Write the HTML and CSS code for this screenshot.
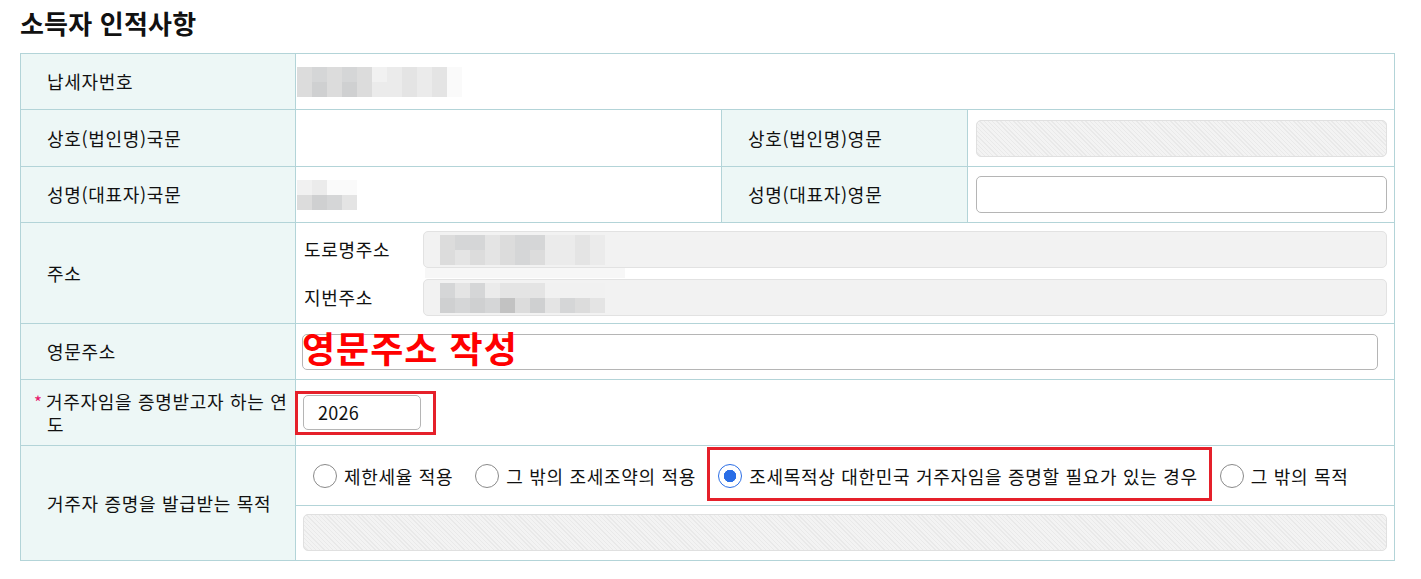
FILE: index.html
```html
<!DOCTYPE html>
<html lang="ko">
<head>
<meta charset="utf-8">
<title>소득자 인적사항</title>
<link rel="stylesheet" href="styles.css">
</head>
<body>
<div class="page">
  <h2 class="title">소득자 인적사항</h2>
  <table class="form">
    <colgroup>
      <col class="c1"><col class="c2"><col class="c3"><col class="c4">
    </colgroup>
    <tr class="r56">
      <th>납세자번호</th>
      <td colspan="3">
        <div class="mosaic m11">
          <i class="g2"></i><i class="g3"></i><i class="g2"></i><i class="g3"></i><i class="g2"></i><i class="g6"></i><i class="g5"></i><i class="g4"></i><i class="g5"></i><i class="g4"></i><i class="g7"></i>
          <i class="g2"></i><i class="g1"></i><i class="g2"></i><i class="g1"></i><i class="g2"></i><i class="g5"></i><i class="g5"></i><i class="g4"></i><i class="g5"></i><i class="g4"></i><i class="g7"></i>
        </div>
      </td>
    </tr>
    <tr class="r57">
      <th>상호(법인명)국문</th>
      <td></td>
      <th>상호(법인명)영문</th>
      <td><div class="inp striped"></div></td>
    </tr>
    <tr class="r56">
      <th>성명(대표자)국문</th>
      <td>
        <div class="mosaic m4">
          <i class="g6"></i><i class="g5"></i><i class="g7"></i><i class="g7"></i>
          <i class="g2"></i><i class="g1"></i><i class="g3"></i><i class="g4"></i>
        </div>
      </td>
      <th>성명(대표자)영문</th>
      <td><div class="inp white"></div></td>
    </tr>
    <tr class="r101">
      <th>주소</th>
      <td colspan="3" class="addr">
        <div class="addr-row">
          <span class="sub">도로명주소</span>
          <div class="inp grey wide">
            <div class="mosaic m11 in">
              <i class="g2"></i><i class="g3"></i><i class="g3"></i><i class="g4"></i><i class="g2"></i><i class="g3"></i><i class="g3"></i><i class="g5"></i><i class="g5"></i><i class="g4"></i><i class="g5"></i>
              <i class="g2"></i><i class="g4"></i><i class="g2"></i><i class="g4"></i><i class="g2"></i><i class="g3"></i><i class="g2"></i><i class="g5"></i><i class="g5"></i><i class="g4"></i><i class="g5"></i>
            </div>
          </div>
          <div class="smear"></div>
        </div>
        <div class="addr-row">
          <span class="sub">지번주소</span>
          <div class="inp grey wide">
            <div class="mosaic m11 in">
              <i class="g3"></i><i class="g4"></i><i class="g3"></i><i class="g5"></i><i class="g4"></i><i class="g4"></i><i class="g4"></i><i class="g6"></i><i class="g6"></i><i class="g6"></i><i class="g6"></i>
              <i class="g1"></i><i class="g3"></i><i class="g1"></i><i class="g3"></i><i class="g0"></i><i class="g2"></i><i class="g1"></i><i class="g4"></i><i class="g3"></i><i class="g2"></i><i class="g4"></i>
            </div>
          </div>
        </div>
      </td>
    </tr>
    <tr class="r56">
      <th>영문주소</th>
      <td colspan="3" class="eng">
        <div class="eng-wrap">
          <div class="inp white"></div>
          <span class="note">영문주소 작성</span>
        </div>
      </td>
    </tr>
    <tr class="r66">
      <th class="req"><span class="star">*</span>거주자임을 증명받고자 하는 연도</th>
      <td colspan="3" class="year">
        <div class="year-wrap">
          <div class="inp white year-inp">2026</div>
          <span class="mark"></span>
        </div>
      </td>
    </tr>
    <tr class="r115">
      <th>거주자 증명을 발급받는 목적</th>
      <td colspan="3" class="purpose">
        <div class="radios">
          <label class="opt"><span class="radio"></span>제한세율 적용</label>
          <label class="opt"><span class="radio"></span>그 밖의 조세조약의 적용</label>
          <label class="opt hl"><span class="radio on"></span>조세목적상 대한민국 거주자임을 증명할 필요가 있는 경우</label>
          <label class="opt"><span class="radio"></span>그 밖의 목적</label>
        </div>
        <div class="purpose-etc">
          <div class="inp striped"></div>
        </div>
      </td>
    </tr>
  </table>
</div>
</body>
</html>
```

FILE: styles.css
```css
* { box-sizing: border-box; }
html, body { margin: 0; padding: 0; background: #fff; }
body {
  font-family: "Noto Sans CJK KR", "Noto Sans", sans-serif;
  color: #111;
  font-size: 18px;
  letter-spacing: 0.7px;
}
.page { padding: 0 27px 0 20px; }
.title {
  margin: 0;
  padding-top: 5px;
  font-size: 26px;
  line-height: 36px;
  font-weight: 700;
  color: #111;
  letter-spacing: 0.2px;
}
.form {
  margin-top: 12px;
  width: 1374px;
  border-collapse: collapse;
  table-layout: fixed;
  border: 1px solid #b3d4d8;
}
.c1 { width: 275px; }
.c2 { width: 426px; }
.c3 { width: 246px; }
.c4 { width: 427px; }
.form th, .form td {
  border: 1px solid #b3d4d8;
  padding: 0;
  vertical-align: middle;
}
.form th {
  background: #edf7f6;
  font-weight: 400;
  text-align: left;
  padding: 0 4px 0 26px;
  line-height: 23px;
}
.form td { padding: 0 7px 0 8px; }
.r56 { height: 56px; }
.r57 { height: 57px; }
.r66 { height: 66px; }
.r101 { height: 101px; }
.r115 { height: 115px; }

.star { color: #e8176c; display: inline-block; width: 12px; margin-left: -13px; font-size: 17px; letter-spacing: 0; }

.inp {
  height: 37px;
  border-radius: 5px;
  border: 1px solid #b5b5b5;
  background: #fff;
}
.inp.striped {
  border-color: #e0e0e0;
  background: repeating-linear-gradient(45deg, #f3f3f3 0 2px, #e9e9e9 2px 3px);
}
.inp.grey { background: #f2f2f2; border-color: #e2e2e2; }

.mosaic { display: grid; grid-auto-rows: 15px; }
.mosaic i { display: block; }
.m11 { grid-template-columns: repeat(11, 15px); width: 165px; }
.m4 { grid-template-columns: repeat(4, 15px); width: 60px; margin-left: -7px; }
.form td > .mosaic.m11 { margin-left: -7px; }
.g0 { background: #c2c2c2; }
.g1 { background: #cfd0d1; }
.g2 { background: #dcdcdc; }
.g3 { background: #d5d6d7; }
.g4 { background: #e4e4e4; }
.g5 { background: #ebebeb; }
.g6 { background: #f1f1f1; }
.g7 { background: #fafafa; }

.addr-row {
  display: flex;
  align-items: center;
  position: relative;
}
.addr-row + .addr-row { margin-top: 11px; }
.sub { width: 119px; flex: none; }
.inp.wide { flex: 1; padding: 3px 0 0 16px; }
.mosaic.in { width: 165px; }
.smear {
  position: absolute;
  left: 121px;
  top: 37px;
  width: 200px;
  height: 10px;
  background: #f7f7f7;
}

.form td.eng { padding: 0 16px 0 6px; }
.eng-wrap { position: relative; }
.eng-wrap .inp { height: 36px; }
.note {
  position: absolute;
  left: 0;
  top: -11px;
  color: #ff0000;
  font-size: 36px;
  font-weight: 700;
  line-height: 48px;
  letter-spacing: 1px;
  white-space: nowrap;
}

.form td.year { padding-left: 7px; }
.year-wrap { position: relative; width: 118px; }
.year-inp {
  height: 35px;
  padding-left: 14px;
  line-height: 33px;
  font-size: 18px;
  letter-spacing: 0.3px;
}
.mark {
  position: absolute;
  left: -8px;
  top: -4px;
  width: 141px;
  height: 44px;
  border: 3px solid #e5202a;
}

.form td.purpose { padding: 0; }
.radios {
  height: 59px;
  border-bottom: 1px solid #b3d4d8;
  display: flex;
  align-items: center;
  padding-left: 17px;
  gap: 22px;
}
.opt {
  display: flex;
  align-items: center;
  gap: 7px;
  white-space: nowrap;
  position: relative;
}
.radio {
  width: 24px;
  height: 24px;
  border-radius: 50%;
  border: 1px solid #8a8a8a;
  background: #fff;
  flex: none;
}
.radio.on {
  border: 1.5px solid #2b6ee6;
  background: radial-gradient(circle, #2b6ee6 0 6px, #fff 6.5px);
}
.opt.hl::after {
  content: "";
  position: absolute;
  left: -11px;
  right: -14px;
  top: -16px;
  bottom: -12px;
  border: 3px solid #e5202a;
}
.purpose-etc { padding: 8px 7px 9px 7px; }
```
